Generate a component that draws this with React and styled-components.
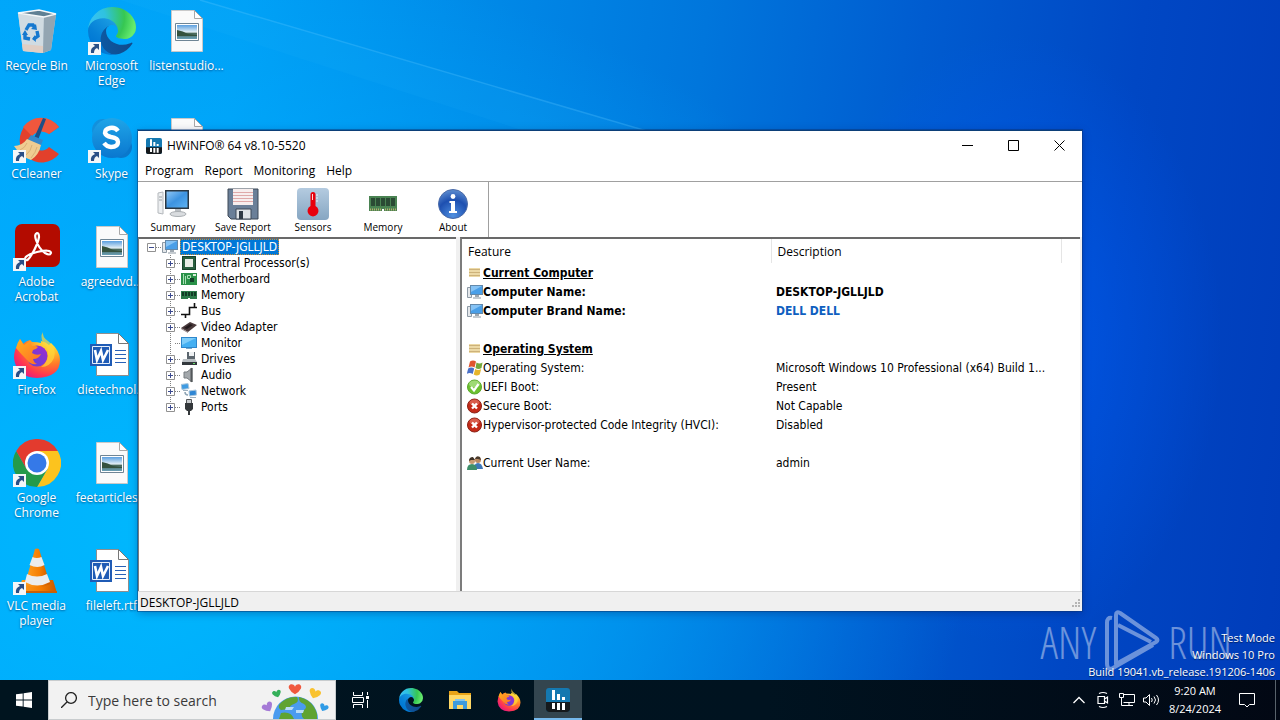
import React from "react";
import styled, { createGlobalStyle, css } from "styled-components";

const uiFont = css`
  font-family: "Open Sans", "Noto Sans", sans-serif;
`;

const classicFont = css`
  font-family: "DejaVu Sans Condensed", "DejaVu Sans", sans-serif;
`;

const GlobalStyle = createGlobalStyle`
  * {
    box-sizing: border-box;
  }

  body {
    margin: 0;
    ${uiFont}
  }

  button, input {
    font: inherit;
    color: inherit;
    border: none;
    padding: 0;
    background: none;
  }

  svg {
    display: block;
    flex: none;
  }
`;

/* ---------- desktop ---------- */

const Screen = styled.div`
  min-height: 100vh;
  display: flex;
  flex-direction: column;
  overflow: hidden;
`;

const Desktop = styled.main`
  flex: 1;
  position: relative;
  background: radial-gradient(
      ellipse 22% 60% at 79% 50%,
      rgba(0, 96, 255, 0.6),
      rgba(0, 80, 230, 0) 75%
    ),
    linear-gradient(
      97deg,
      #00a6fa 0%,
      #00a0f6 18%,
      #008ae8 35%,
      #0076dc 52%,
      #005cd0 68%,
      #0047c4 84%,
      #003cba 100%
    );
`;

const Glow = styled.div`
  position: absolute;
  inset: 0;
  background: radial-gradient(
    ellipse 62% 85% at 14% 78%,
    rgba(0, 188, 255, 0.85),
    rgba(0, 176, 255, 0.5) 55%,
    rgba(0, 160, 255, 0) 100%
  );
`;

const Beam = styled.svg`
  position: absolute;
  top: 0;
  left: 0;
  width: 100%;
  height: 100%;
`;

const Shortcuts = styled.div`
  position: relative;
  display: grid;
  grid-auto-flow: column;
  grid-template-rows: repeat(6, 108px);
  grid-auto-columns: 75px;
  margin-left: -1px;
`;

const ShortcutLink = styled.a`
  display: flex;
  flex-direction: column;
  align-items: center;
  padding-top: 7px;
  color: #fff;
  font-size: 12px;
  line-height: 15px;
  text-align: center;
  text-decoration: none;
  text-shadow: 0 1px 2px rgba(0, 30, 80, 0.6);
`;

const ShortcutPicture = styled.span`
  position: relative;
  width: 48px;
  height: 48px;
  margin-bottom: 3px;
`;

const ArrowBadge = styled.svg`
  position: absolute;
  left: 0;
  bottom: 0;
`;

const Watermark = styled.div`
  position: absolute;
  right: 48px;
  bottom: 6px;
  display: flex;
  align-items: center;
  gap: 8px;
  color: #fff;
  opacity: 0.42;
  font-family: "Open Sans Condensed Light", "Open Sans Condensed", "Roboto", sans-serif;
  font-size: 44px;
  font-weight: 300;
  line-height: 64px;
`;

const BuildInfo = styled.div`
  position: absolute;
  right: 5px;
  bottom: 0;
  color: #fff;
  font-size: 11px;
  line-height: 17px;
  text-align: right;
  text-shadow: 0 1px 1px rgba(0, 0, 0, 0.5);
`;

/* ---------- application window ---------- */

const Window = styled.section`
  position: absolute;
  top: 130px;
  left: 138px;
  right: 198px;
  bottom: 69px;
  display: flex;
  flex-direction: column;
  background: #fff;
  border-top: 1px solid #0c3f78;
  box-shadow: 0 0 0 1px rgba(10, 50, 110, 0.45), 0 2px 8px rgba(0, 20, 80, 0.35);
  color: #000;
`;

const TitleBar = styled.header`
  display: flex;
  align-items: center;
  height: 29px;
  padding-left: 8px;
`;

const Title = styled.h1`
  flex: 1;
  margin: 0 0 0 5px;
  font-size: 12px;
  font-weight: normal;
`;

const CaptionButton = styled.button`
  width: 46px;
  height: 29px;
  display: flex;
  align-items: center;
  justify-content: center;
`;

const MenuBar = styled.nav`
  display: flex;
  height: 21px;
  gap: 11px;
  padding-left: 7px;
  font-size: 12px;
  line-height: 22px;
`;

const Toolbar = styled.div`
  display: flex;
  height: 56px;
  border-top: 1px solid #a0a0a0;
`;

const ToolGroup = styled.div`
  display: flex;
  border-right: 1px solid #a0a0a0;
`;

const ToolButton = styled.button`
  width: 70px;
  display: flex;
  flex-direction: column;
  align-items: center;
  padding-top: 6px;
  font-size: 10px;
  line-height: 14px;
  white-space: nowrap;
`;

const Panes = styled.div`
  flex: 1;
  display: flex;
  gap: 4px;
  min-height: 0;
  ${classicFont}
  font-size: 12px;
  background: #f0f0f0;
`;

const pane = css`
  background: #fff;
  border-top: 2px solid #696969;
  border-left: 2px solid #7c7c7c;
`;

const TreePane = styled.div`
  ${pane}
  width: 318px;
  border-left-width: 1px;
`;

const ListPane = styled.div`
  ${pane}
  flex: 1;
  margin-right: 2px;
  overflow: hidden;
`;

const StatusBar = styled.footer`
  display: flex;
  justify-content: space-between;
  align-items: center;
  height: 20px;
  padding: 2px 0 0 2px;
  background: #f0f0f0;
  border-top: 1px solid #d7d7d7;
  font-size: 12px;
`;

/* ---------- tree ---------- */

const List = styled.ul`
  margin: 0;
  padding: 0;
  list-style: none;
`;

const Branch = styled(List)`
  background: repeating-linear-gradient(#808080 0 1px, #fff 1px 2px) 31px 0 / 1px
    calc(100% - 8px) no-repeat;
`;

const TreeRow = styled.div`
  display: flex;
  align-items: center;
  height: 16px;
  padding-left: ${props => (props.$level ? 27 : 8)}px;
`;

const Expander = styled.button`
  width: 9px;
  height: 9px;
  flex: none;
`;

const NoExpander = styled.span`
  width: 9px;
`;

const Connector = styled.span`
  width: 6px;
  height: 1px;
  background: repeating-linear-gradient(90deg, #808080 0 1px, #fff 1px 2px);
`;

const TreeLabel = styled.span`
  padding: 0 2px;
  margin-left: 2px;
  line-height: 16px;
  white-space: nowrap;
  ${props =>
    props.$selected &&
    css`
      color: #fff;
      background: #0078d7;
      outline: 1px dotted #d08a30;
      outline-offset: -1px;
    `}
`;

/* ---------- feature table ---------- */

const Table = styled.table`
  width: 100%;
  border-collapse: collapse;
  table-layout: fixed;
`;

const HeadCell = styled.th`
  height: 24px;
  padding: 0 6px;
  border-right: 1px solid #e5e5e5;
  ${uiFont}
  font-size: 12px;
  font-weight: normal;
  text-align: left;

  &:last-child {
    border-right: none;
  }
`;

const Cell = styled.td`
  height: 19px;
  padding: 0 5px;
  white-space: nowrap;
  font-weight: ${props => (props.$bold ? "bold" : "normal")};
  color: ${props => (props.$accent ? "#0f5fc0" : "#000")};
`;

const Feature = styled.span`
  display: flex;
  align-items: center;
  height: 19px;
  text-decoration: ${props => (props.$heading ? "underline" : "none")};
`;

/* ---------- taskbar ---------- */

const Taskbar = styled.footer`
  position: relative;
  display: flex;
  align-items: stretch;
  height: 40px;
  color: #fff;
  background: linear-gradient(90deg, #00141f, #001320 60%, #020814);
`;

const TaskButton = styled.button`
  width: 48px;
  margin-right: 1px;
  display: flex;
  align-items: center;
  justify-content: center;
  ${props =>
    props.$active &&
    css`
      background: #33454f;
      border-bottom: 2px solid #76b9ed;
      padding-top: 2px;
    `}
`;

const SearchBox = styled.label`
  display: flex;
  align-items: center;
  width: 288px;
  gap: 11px;
  padding-left: 12px;
  margin: 0 2px 0 -1px;
  color: #222;
  background: #f2f2f2;
  border: 1px solid #c8ccce;
`;

const SearchInput = styled.input`
  flex: 1;
  min-width: 0;
  font-size: 14px;
  outline: none;

  &::placeholder {
    color: #3a3a3a;
    opacity: 1;
  }
`;

const Tray = styled.div`
  display: flex;
  align-items: center;
  margin-left: auto;
`;

const TrayButton = styled.button`
  display: flex;
  justify-content: center;
  width: ${props => (props.$wide ? 40 : 24)}px;
`;

const Clock = styled.time`
  width: 64px;
  font-size: 11px;
  line-height: 18px;
  text-align: center;
`;

const ShowDesktop = styled.button`
  width: 5px;
  height: 40px;
  margin-left: 8px;
  border-left: 1px solid #59636b;
`;

/* ---------- desktop icons ---------- */

const RecycleBinIcon = () => (
  <svg width="48" height="48" viewBox="0 0 48 48">
    <path d="M5 6l21-3 17 4-5 36-8 3-20-2z" fill="#c9d3da" opacity=".92" />
    <path d="M5 6l26 3-1 37-20-2z" fill="#d3dce2" opacity=".9" />
    <path d="M31 9l12-2-5 36-8 3z" fill="#93a5b2" />
    <path d="M5 6l21-3 17 4-12 3z" fill="#5f8094" stroke="#f4f7f9" strokeWidth="1.400" />
    <path d="M9 37l21 2v7l-20-2z" fill="#e3cbbd" opacity=".8" />
    <g fill="none" stroke="#1578cf" strokeWidth="3.400">
      <path d="M13 23l3-5h4l2 3" />
      <path d="M24 24l1 5-4 3" />
      <path d="M17 32l-5-1v-4" />
    </g>
    <path d="M18 22l6 1-1-6zM22 28l-3 4 4 3zM9 28l3-5 3 5z" fill="#1578cf" />
  </svg>
);

const EdgeIcon = ({ size = 48, id = "edge" }) => (
  <svg width={size} height={size} viewBox="0 0 256 256">
    <defs>
      <linearGradient id={`${id}a`} x1="63" y1="177" x2="241" y2="177" gradientUnits="userSpaceOnUse">
        <stop offset="0" stopColor="#0c59a4" />
        <stop offset="1" stopColor="#114a8b" />
      </linearGradient>
      <linearGradient id={`${id}b`} x1="157" y1="100" x2="46" y2="221" gradientUnits="userSpaceOnUse">
        <stop offset="0" stopColor="#1b9de2" />
        <stop offset=".16" stopColor="#1595df" />
        <stop offset=".67" stopColor="#0680d7" />
        <stop offset="1" stopColor="#0078d4" />
      </linearGradient>
      <radialGradient id={`${id}c`} cx="30" cy="60" r="225" gradientUnits="userSpaceOnUse">
        <stop offset="0" stopColor="#35c1f1" />
        <stop offset=".3" stopColor="#2fc2df" />
        <stop offset=".75" stopColor="#36c752" />
        <stop offset="1" stopColor="#66eb6e" />
      </radialGradient>
    </defs>
    <g transform="translate(-4.63 -4.92)">
      <path
        fill={`url(#${id}a)`}
        d="M235.68 195.46a93.73 93.73 0 0 1-10.54 4.71 101.87 101.87 0 0 1-35.9 6.46c-47.32 0-88.54-32.55-88.54-74.32A31.48 31.48 0 0 1 117.13 105c-42.8 1.8-53.8 46.4-53.8 72.53 0 73.88 68.09 81.37 82.76 81.37 7.91 0 19.84-2.3 27-4.56l1.31-.44a128.34 128.34 0 0 0 66.6-52.8 4 4 0 0 0-5.32-5.64Z"
      />
      <path
        fill={`url(#${id}b)`}
        d="M110.34 246.34A79.2 79.2 0 0 1 87.6 225a80.72 80.72 0 0 1 29.53-120c3.12-1.47 8.45-4.13 15.54-4a32.35 32.35 0 0 1 25.69 13 31.88 31.88 0 0 1 6.36 18.66c0-.21 24.46-79.6-80-79.6-43.9 0-80 41.66-80 78.21a130.15 130.15 0 0 0 12.11 56 128 128 0 0 0 156.38 67.11 75.55 75.55 0 0 1-62.78-8Z"
      />
      <path
        fill={`url(#${id}c)`}
        d="M156.94 153.78c-.81 1.05-3.3 2.5-3.3 5.66 0 2.61 1.7 5.12 4.72 7.23 14.38 10 41.49 8.68 41.56 8.68a59.56 59.56 0 0 0 30.27-8.35 61.38 61.38 0 0 0 30.43-52.88c.26-22.41-8-37.31-11.34-43.91C228.09 28.76 182.35 4.92 132.61 4.92a128 128 0 0 0-128 126.2c.48-36.54 36.8-66.05 80-66.05 3.5 0 23.46.34 42 10.07 16.34 8.58 24.9 18.94 30.85 29.21 6.18 10.67 7.28 24.15 7.28 29.52s-2.74 13.33-7.8 19.91Z"
      />
    </g>
  </svg>
);

const ImageFileIcon = () => (
  <svg width="48" height="48" viewBox="0 0 48 48">
    <defs>
      <linearGradient id="photo" x1="0" y1="0" x2="0" y2="1">
        <stop offset="0" stopColor="#5b9fe0" />
        <stop offset=".5" stopColor="#e3eff5" />
        <stop offset=".6" stopColor="#4b6a5b" />
        <stop offset="1" stopColor="#6aa0b8" />
      </linearGradient>
    </defs>
    <path d="M8.500 3.500h23l8 8v33h-31z" fill="#fafafa" stroke="#c9c9c9" />
    <path d="M31.500 3.500v8h8z" fill="#fff" stroke="#a8a8a8" />
    <path d="M12.500 16.500h23v17h-23z" fill="#fff" stroke="#6f8595" />
    <path d="M14 18h20v14H14z" fill="url(#photo)" />
    <path d="M14 23q6 1 11 4l9 1v1H14z" fill="#35523e" />
  </svg>
);

const WordFileIcon = () => (
  <svg width="48" height="48" viewBox="0 0 48 48">
    <path d="M8.500 2.500h22l10 10v32h-32z" fill="#fff" stroke="#8e8e8e" />
    <path d="M30.500 2.500v10h10z" fill="#fff" stroke="#777" />
    <path d="M27 19.500h11M27 23.500h11M27 27.500h11M27 31.500h11" stroke="#2a62b8" />
    <path d="M2 13h22v22H2z" fill="#1f5bb5" />
    <path d="M4.500 15.500h17v17h-17z" fill="none" stroke="#e6eefa" strokeWidth="1" />
    <path d="M7 19l2 10 4-9 2 9 5-10" fill="none" stroke="#fff" strokeWidth="2.600" />
  </svg>
);

const CCleanerIcon = () => (
  <svg width="48" height="48" viewBox="0 0 48 48">
    <path d="M46 12a22 22 0 1 0 0 27l-10-7a10 10 0 1 1 0-13z" fill="#e2402c" />
    <path d="M46 12A22 22 0 0 0 10 12l9 9q8-8 17-2z" fill="#f0573d" />
    <path d="M30 3l-9 20 4 2L33 4z" fill="#1f4f86" />
    <path d="M18 20l12 5-3 8-14-6z" fill="#3588ca" />
    <path d="M14 24l14 6q-2 10-10 15Q8 42 1 31q8 0 13-7z" fill="#efcc91" />
    <path d="M14 28q-2 5-7 7M19 30q-1 6-6 10M24 32q-1 5-6 11" stroke="#d8b077" fill="none" />
  </svg>
);

const SkypeIcon = () => (
  <svg width="48" height="48" viewBox="0 0 48 48">
    <defs>
      <linearGradient id="skype" x1="0" y1="0" x2="0" y2="1">
        <stop offset="0" stopColor="#1fa5e8" />
        <stop offset="1" stopColor="#0a77cf" />
      </linearGradient>
    </defs>
    <circle cx="15" cy="15" r="11" fill="#1290dc" />
    <circle cx="33" cy="32" r="11" fill="#0a78cc" />
    <circle cx="24" cy="23" r="20" fill="url(#skype)" />
    <path
      d="M30 16q-3-4-8-3-5 1-5 5 1 3 6 4 7 1 7 5 0 5-7 5-4 0-7-4"
      fill="none"
      stroke="#fff"
      strokeWidth="4.400"
    />
  </svg>
);

const AcrobatIcon = () => (
  <svg width="48" height="48" viewBox="0 0 48 48">
    <rect x="2" y="1" width="45" height="43" rx="7" fill="#b30b00" />
    <path
      d="M24 10q-3 1-1 7 3 9 9 13 5 3 6 0 0-4-14-1-12 3-12 7 2 4 7-5 6-10 7-17 0-4-2-4z"
      fill="none"
      stroke="#fff"
      strokeWidth="2.200"
    />
  </svg>
);

const FirefoxIcon = ({ size = 48, id = "ff" }) => (
  <svg width={size} height={size} viewBox="0 0 48 48">
    <defs>
      <radialGradient id={`${id}a`} cx=".8" cy=".15" r="1">
        <stop offset="0" stopColor="#fff44f" />
        <stop offset=".3" stopColor="#ffc02c" />
        <stop offset=".55" stopColor="#ff7a28" />
        <stop offset=".8" stopColor="#ff3750" />
        <stop offset="1" stopColor="#e31587" />
      </radialGradient>
      <linearGradient id={`${id}b`} x1="0" y1="1" x2="1" y2="0">
        <stop offset="0" stopColor="#5b45d8" />
        <stop offset="1" stopColor="#a02bd0" />
      </linearGradient>
      <linearGradient id={`${id}c`} x1="0" y1="0" x2="1" y2="1">
        <stop offset="0" stopColor="#ffb21a" />
        <stop offset="1" stopColor="#ff6a2a" />
      </linearGradient>
    </defs>
    <path
      d="M30 1q-3 4-2 9 5 1 8 4l2-2q9 8 9 17 0 17-23 18Q3 46 1 27 1 18 6 12l1-4 3 5q3-3 7-4l2 2q6 0 9 1-1-7 2-11z"
      fill={`url(#${id}a)`}
    />
    <circle cx="24" cy="25" r="10.500" fill={`url(#${id}b)`} />
    <path
      d="M3 17q1-5 4-9l4 6q4-3 7-4-1 3 1 5 3-1 6 1-1 2-5 3l-1 3q4 3 9 1-2 5-8 5 1 4 4 5-7 1-10-4-6-6-11-12z"
      fill={`url(#${id}c)`}
    />
    <path d="M30 1q-3 5 0 11 6 5 5 13-1 7-7 11 9 0 13-9 3-11-6-17-6-4-5-9z" fill="#ffd53a" opacity=".7" />
  </svg>
);

const ChromeIcon = () => (
  <svg width="48" height="48" viewBox="0 0 48 48">
    <path d="M24 12h20.800A24 24 0 0 1 24 48L34.400 30z" fill="#fcc31e" />
    <path d="M3.200 12A24 24 0 0 0 24 48L34.400 30 13.600 30z" fill="#249a4a" />
    <path d="M3.200 12A24 24 0 0 1 44.800 12H24L13.600 30z" fill="#e33b2e" />
    <circle cx="24" cy="24" r="12" fill="#fff" />
    <circle cx="24" cy="24" r="9.500" fill="#3579e8" />
  </svg>
);

const VlcIcon = () => (
  <svg width="48" height="48" viewBox="0 0 48 48">
    <defs>
      <linearGradient id="cone" x1="0" x2="1">
        <stop offset="0" stopColor="#ffa022" />
        <stop offset=".6" stopColor="#f57c00" />
        <stop offset="1" stopColor="#c85800" />
      </linearGradient>
    </defs>
    <path d="M9 33h31l4 13H4z" fill="url(#cone)" />
    <path d="M4 44h40v2H4z" fill="#c96006" />
    <path d="M22 2q2-1 4 0l11 35q-13 7-25 0z" fill="url(#cone)" />
    <path d="M19.500 10q4 2 9 0l3 8q-7 4-15 0z" fill="#ececec" />
    <path d="M14 27q10 5 20 0l3 8q-13 7-25 0z" fill="#ececec" />
  </svg>
);

/* ---------- application icons ---------- */

const HwinfoIcon = ({ size = 16 }) => (
  <svg width={size} height={size} viewBox="0 0 24 24">
    <rect width="24" height="24" rx="3" fill="#1478b0" />
    <path d="M0 14h24v7a3 3 0 0 1-3 3H3a3 3 0 0 1-3-3z" fill="#15191c" />
    <path d="M7.500 2v10M12.500 6v6M17.500 9v3M7.500 15v6M12.500 15v7M17.500 15v7" stroke="#fff" strokeWidth="3" />
  </svg>
);

const ComputerIcon = () => (
  <svg width="32" height="32" viewBox="0 0 32 32">
    <defs>
      <linearGradient id="lcd" x1="0" y1="0" x2="1" y2="1">
        <stop offset="0" stopColor="#8fc6f5" />
        <stop offset=".5" stopColor="#3d93e0" />
        <stop offset="1" stopColor="#5db2f2" />
      </linearGradient>
    </defs>
    <path d="M1 5l5-1v22l-5-1z" fill="#eceef0" stroke="#b4b8bc" />
    <path d="M2 9h3M2 12h3" stroke="#9ba1a6" />
    <path d="M8 2h24v19H8z" fill="#2a3742" />
    <path d="M9.500 3.500h21v16h-21z" fill="url(#lcd)" />
    <path d="M18 21h6v4h-6z" fill="#b9bec3" />
    <ellipse cx="21" cy="26" rx="8" ry="2.500" fill="#d9dcdf" stroke="#a9aeb2" />
  </svg>
);

const SmallComputerIcon = () => (
  <svg width="16" height="16" viewBox="0 0 16 16">
    <path d="M.5 3.500h4v10h-4z" fill="#e4e7ea" stroke="#8e9aa5" />
    <path d="M3 1h13v10H3z" fill="#6389ab" />
    <path d="M4 2h11v8H4z" fill="#4a9fe8" />
    <path d="M4 2h11l-11 6z" fill="#86c3f5" />
    <path d="M8 11h4v2H8z" fill="#9fa8b0" />
    <path d="M6 13h8v2H6z" fill="#c5cbd0" />
  </svg>
);

const FloppyIcon = () => (
  <svg width="32" height="32" viewBox="0 0 32 32">
    <path d="M1 1h30v30H4l-3-3z" fill="#6a7f98" stroke="#3c4856" />
    <path d="M6 1h20v16H6z" fill="#f7eeee" />
    <path d="M6 4.500h20M6 7.500h20M6 10.500h20M6 13.500h20" stroke="#dfa9a9" />
    <path d="M9 21h15v10H9z" fill="#dfe3e7" stroke="#3c4856" />
    <path d="M12 23h4v8h-4z" fill="#2e3945" />
  </svg>
);

const ThermometerIcon = () => (
  <svg width="32" height="32" viewBox="0 0 32 32">
    <defs>
      <linearGradient id="tile" x1="0" y1="0" x2="0" y2="1">
        <stop offset="0" stopColor="#b4cbe0" />
        <stop offset="1" stopColor="#86a6c2" />
      </linearGradient>
    </defs>
    <rect width="32" height="32" rx="4" fill="url(#tile)" />
    <path d="M16 4a2.500 2.500 0 0 1 2.500 2.500V18a5.500 5.500 0 1 1-5 0V6.500A2.500 2.500 0 0 1 16 4z" fill="#e8000c" />
    <path d="M15.500 6v6" stroke="#ffd5d5" />
    <path d="M19 7h2M19 10h2M19 13h2" stroke="#e9f1f8" />
  </svg>
);

const RamIcon = () => (
  <svg width="32" height="32" viewBox="0 0 32 32">
    <path d="M2 8h28v15h-13v-2h-2v2H2z" fill="#4a8352" />
    <path d="M4 10h4v8H4zM9 10h4v8H9zM14 10h4v8h-4zM19 10h4v8h-4zM24 10h4v8h-4z" fill="#2b4a34" />
    <path d="M3 21.500h12M18 21.500h12" stroke="#b9b070" strokeDasharray="1 1" strokeWidth="2" />
  </svg>
);

const SmallRamIcon = () => (
  <svg width="16" height="16" viewBox="0 0 16 16">
    <path d="M0 4h16v8H9v-1H7v1H0z" fill="#2c7a4a" />
    <path d="M1 5h2v4H1zM4 5h2v4H4zM7 5h2v4H7zM10 5h2v4h-2zM13 5h2v4h-2z" fill="#123c26" />
  </svg>
);

const InfoIcon = () => (
  <svg width="32" height="32" viewBox="0 0 32 32">
    <defs>
      <radialGradient id="info" cx=".5" cy=".9" r=".9">
        <stop offset="0" stopColor="#4f8fe0" />
        <stop offset=".6" stopColor="#1d4fb0" />
        <stop offset="1" stopColor="#5f8ed0" />
      </radialGradient>
    </defs>
    <circle cx="16" cy="16" r="14.500" fill="url(#info)" stroke="#4a6aa8" />
    <circle cx="16" cy="8.500" r="2.400" fill="#fff" />
    <path d="M12.500 13H18v10h2v2h-8v-2h2v-8h-1.500z" fill="#fff" />
  </svg>
);

const CpuIcon = () => (
  <svg width="16" height="16" viewBox="0 0 16 16">
    <path d="M1 1h14v14H1z" fill="#2a5f3f" />
    <path d="M4 4h8v8H4z" fill="#e9ede6" />
    <path d="M1.500 1.500h13v13h-13z" fill="none" stroke="#174028" />
  </svg>
);

const BoardIcon = () => (
  <svg width="16" height="16" viewBox="0 0 16 16">
    <path d="M0 2h16v12H0z" fill="#2a9148" />
    <path d="M2.500 3v10M4.500 5v8M6.500 4.500h3v3h-3z" stroke="#a9e0b4" fill="none" />
    <path d="M9 7h4v4H9z" fill="#14402a" />
    <path d="M12 3h3v2h-3z" fill="#d8eedc" />
  </svg>
);

const BusIcon = () => (
  <svg width="16" height="16" viewBox="0 0 16 16">
    <path d="M0 11.500h8.500v-7H16M13.500 0v5M4.500 11v4" fill="none" stroke="#111" strokeWidth="1.600" />
  </svg>
);

const VideoCardIcon = () => (
  <svg width="16" height="16" viewBox="0 0 16 16">
    <path d="M0 9l9-6 7 3-9 7z" fill="#4a3a3c" />
    <path d="M3 9l6-4 3 1-6 4z" fill="#231b1d" />
    <path d="M0 9l7 4v1l-7-4z" fill="#8f7f80" />
  </svg>
);

const MonitorIcon = () => (
  <svg width="16" height="16" viewBox="0 0 16 16">
    <path d="M0 2h16v11H0z" fill="#2e87cc" />
    <path d="M1 3h14v9H1z" fill="#45b0f2" />
    <path d="M1 3h14L1 10z" fill="#7fcdf9" />
    <path d="M5 13h6v1H5z" fill="#7aa9c9" />
  </svg>
);

const DriveIcon = () => (
  <svg width="16" height="16" viewBox="0 0 16 16">
    <path d="M6 1h8v8H6z" fill="#5c666e" />
    <path d="M8 1h5v4H8z" fill="#eef1f3" />
    <path d="M2 8h12l2 3v3H1v-3z" fill="#b9bfc3" />
    <path d="M1 11h15v3H1z" fill="#33393d" />
    <path d="M12 12h2v1h-2z" fill="#69e06b" />
  </svg>
);

const SpeakerIcon = () => (
  <svg width="16" height="16" viewBox="0 0 16 16">
    <path d="M3 5h3l5-4v14l-5-4H3z" fill="#a3a8ac" stroke="#777c80" />
    <path d="M10.500 1v14" stroke="#54585b" strokeWidth="2" />
  </svg>
);

const NetworkIcon = () => (
  <svg width="16" height="16" viewBox="0 0 16 16">
    <path d="M0 1.500L7 .5l1 5-7 1z" fill="#3f9be2" stroke="#a9c6dc" />
    <path d="M2 7h5v1H2z" fill="#9fb2c0" />
    <path d="M8 8l7-1 .5 5-7 1z" fill="#2e86d4" stroke="#a9c6dc" />
    <path d="M9 14h6v1H9z" fill="#9fb2c0" />
    <path d="M4 9q0 3 3 3" fill="none" stroke="#8fa5b5" strokeWidth="1.500" />
  </svg>
);

const PortIcon = () => (
  <svg width="16" height="16" viewBox="0 0 16 16">
    <path d="M5.500 .5h5v4h-5z" fill="#c9cccf" stroke="#55595c" />
    <path d="M4 4h8v6l-2 2H6l-2-2z" fill="#34383b" />
    <path d="M8 12v4" stroke="#34383b" strokeWidth="2" />
  </svg>
);

const SectionIcon = () => (
  <svg width="16" height="16" viewBox="0 0 16 16">
    <path d="M2 3h11v9H2z" fill="#ecd9a6" />
    <path d="M2 4.500h11M2 7.500h11M2 10.500h11" stroke="#cdb27a" />
  </svg>
);

const WindowsXpIcon = () => (
  <svg width="16" height="16" viewBox="0 0 16 16">
    <path d="M3 1.500q3-2 6 0L7.500 7.500q-3-2-6 0z" fill="#e0552f" />
    <path d="M9.500 2.500q3 2 6 0L14.500 8q-3 2-6 0z" fill="#74a83c" />
    <path d="M1.200 8.500q3-2 6 0L5.700 14q-3-2-6 0z" fill="#4a70c8" />
    <path d="M8.200 9q3 2 6 0l-1.500 5.500q-3 2-6 0z" fill="#e6b52c" />
  </svg>
);

const CheckIcon = () => (
  <svg width="16" height="16" viewBox="0 0 16 16">
    <circle cx="7.500" cy="8" r="7" fill="#6cc02f" stroke="#5aa82c" />
    <ellipse cx="7.500" cy="5" rx="5.500" ry="3.500" fill="#b5e693" opacity=".7" />
    <path d="M4 8l3 3.500L11.500 5" fill="none" stroke="#fff" strokeWidth="2.200" />
  </svg>
);

const CrossIcon = () => (
  <svg width="16" height="16" viewBox="0 0 16 16">
    <circle cx="7.500" cy="8" r="7" fill="#c42a18" stroke="#8a2015" />
    <ellipse cx="7.500" cy="4.500" rx="5" ry="3" fill="#e8806f" opacity=".6" />
    <path d="M5 5.500l5 5M10 5.500l-5 5" stroke="#fff" strokeWidth="2.400" />
  </svg>
);

const UsersIcon = () => (
  <svg width="16" height="16" viewBox="0 0 16 16">
    <circle cx="11" cy="5" r="3" fill="#b98a62" />
    <path d="M8 4q1-4 5-2l1 3-3-1z" fill="#4b3a2c" />
    <path d="M7 14q0-6 4-6t5 6z" fill="#3f78b8" />
    <circle cx="5" cy="6" r="3" fill="#c99b72" />
    <path d="M2 6q0-4 4-4l2 3-4 0z" fill="#3d3026" />
    <path d="M0 15q0-6 5-6t5 6z" fill="#3f8f6a" />
  </svg>
);

const ExpanderGlyph = ({ open }) => (
  <svg width="9" height="9" viewBox="0 0 9 9">
    <path d="M.5 .5h8v8h-8z" fill="#fff" stroke="#919191" />
    <path d={open ? "M2 4.500h5" : "M2 4.500h5M4.500 2v5"} stroke="#3b4a8f" />
  </svg>
);

/* ---------- taskbar icons ---------- */

const StartIcon = () => (
  <svg width="16" height="16" viewBox="0 0 16 16">
    <path d="M0 2.300L6.700 1.400V7.600H0zM7.600 1.200L16 0v7.600H7.600zM0 8.400h6.700v6.200L0 13.700zM7.600 8.400H16V16l-8.400-1.200z" fill="#fff" />
  </svg>
);

const SearchIcon = () => (
  <svg width="16" height="16" viewBox="0 0 16 16">
    <circle cx="10" cy="6" r="5.400" fill="none" stroke="#222" strokeWidth="1.300" />
    <path d="M6 10l-6 6" stroke="#222" strokeWidth="1.300" />
  </svg>
);

const heart = "M0 2C-2-3-9-1-7 4Q-5 8 0 11 5 8 7 4C9-1 2-3 0 2z";

const EarthIcon = () => (
  <svg width="76" height="38" viewBox="0 0 76 38">
    <path d={heart} transform="translate(36 4) scale(.85)" fill="#f0583e" />
    <path d={heart} transform="translate(17 10) rotate(-18) scale(.6)" fill="#35b05a" />
    <path d={heart} transform="translate(57 9) rotate(20) scale(.8)" fill="#f9c22f" />
    <path d={heart} transform="translate(7 23) rotate(-30) scale(.75)" fill="#a57ad6" />
    <path d={heart} transform="translate(66 24) rotate(25) scale(.6)" fill="#2f9be6" />
    <path d="M14 38a22.500 22.500 0 0 1 45 0z" fill="#4a9bef" />
    <path d="M20 24q7-9 18-8 3 5-3 7-4 1-5 5l-8 1q-3-2-2-5zM40 16q14 3 18 17v5H45q-5-5 0-9 4-3 0-6-6-2-5-7zM22 32q10-2 13 6H20z" fill="#5fa331" />
    <path d="M27 26h8l-2 3h-7zM37 29h8l-1 3h-7z" fill="#b8dcf8" />
  </svg>
);

const TaskViewIcon = () => (
  <svg width="20" height="16" viewBox="0 0 20 16">
    <path d="M1.500 0v3.500h9V0M1.500 16v-3.500h9V16M.5 5.500h11v5H.5z" fill="none" stroke="#fff" />
    <path d="M15.500 0v3M15.500 8v8" stroke="#fff" />
    <path d="M14 4h3v3h-3z" fill="#fff" />
  </svg>
);

const ExplorerIcon = () => (
  <svg width="22" height="20" viewBox="0 0 22 20">
    <path d="M0 1h8l2 2h12v4H0z" fill="#e8a317" />
    <path d="M0 5h22v14H0z" fill="#ffd866" />
    <path d="M4 11h14v8h-4v-4H8v4H4z" fill="#3f9bdc" />
    <path d="M6 9h10v2H6z" fill="#83c5ee" />
  </svg>
);

const ChevronUpIcon = () => (
  <svg width="12" height="16" viewBox="0 0 12 16">
    <path d="M.5 11L6 5.500 11.500 11" fill="none" stroke="#fff" strokeWidth="1.300" />
  </svg>
);

const MeetNowIcon = () => (
  <svg width="18" height="18" viewBox="0 0 18 18">
    <path d="M4 5.500h6.500v7H4zM10.500 8l3-2v6l-3-2M5 2.500q4-2 8 0M5 15.500q4 2 8 0" fill="none" stroke="#fff" strokeWidth="1.200" />
  </svg>
);

const EthernetIcon = () => (
  <svg width="18" height="16" viewBox="0 0 18 16">
    <path d="M5.500 2.500h11v8h-11M11 10.500v3M7 13.500h8M1.500 1.500h4v4h-4zM3.500 5.500v8h4" fill="none" stroke="#fff" />
  </svg>
);

const VolumeIcon = () => (
  <svg width="18" height="16" viewBox="0 0 18 16">
    <path d="M1.500 6h2.500l3.500-3.500v11L4 10H1.500zM9.500 6q1.500 2 0 4M12 4.500q3 3.500 0 7M14.500 3q4 5 0 10" fill="none" stroke="#fff" />
  </svg>
);

const ActionCenterIcon = () => (
  <svg width="16" height="16" viewBox="0 0 16 16">
    <path d="M.5 1.500h15v11h-5L8 15l-2.500-2.500h-5z" fill="none" stroke="#fff" />
  </svg>
);

/* ---------- data ---------- */

const shortcuts = [
  { label: "Recycle Bin", icon: <RecycleBinIcon /> },
  { label: "CCleaner", icon: <CCleanerIcon />, link: true },
  { label: "Adobe Acrobat", icon: <AcrobatIcon />, link: true },
  { label: "Firefox", icon: <FirefoxIcon />, link: true },
  { label: "Google Chrome", icon: <ChromeIcon />, link: true },
  { label: "VLC media player", icon: <VlcIcon />, link: true },
  { label: "Microsoft Edge", icon: <EdgeIcon />, link: true },
  { label: "Skype", icon: <SkypeIcon />, link: true },
  { label: "agreedvd...", icon: <ImageFileIcon /> },
  { label: "dietechnol...", icon: <WordFileIcon /> },
  { label: "feetarticles...", icon: <ImageFileIcon /> },
  { label: "fileleft.rtf", icon: <WordFileIcon /> },
  { label: "listenstudio...", icon: <ImageFileIcon /> },
  { label: "", icon: <ImageFileIcon /> }
];

const tools = [
  { label: "Summary", icon: <ComputerIcon /> },
  { label: "Save Report", icon: <FloppyIcon /> },
  { label: "Sensors", icon: <ThermometerIcon /> },
  { label: "Memory", icon: <RamIcon /> },
  { label: "About", icon: <InfoIcon /> }
];

const devices = [
  { label: "Central Processor(s)", icon: <CpuIcon /> },
  { label: "Motherboard", icon: <BoardIcon /> },
  { label: "Memory", icon: <SmallRamIcon /> },
  { label: "Bus", icon: <BusIcon /> },
  { label: "Video Adapter", icon: <VideoCardIcon /> },
  { label: "Monitor", icon: <MonitorIcon />, leaf: true },
  { label: "Drives", icon: <DriveIcon /> },
  { label: "Audio", icon: <SpeakerIcon /> },
  { label: "Network", icon: <NetworkIcon /> },
  { label: "Ports", icon: <PortIcon /> }
];

const features = [
  { name: "Current Computer", icon: <SectionIcon />, heading: true },
  { name: "Computer Name:", icon: <SmallComputerIcon />, value: "DESKTOP-JGLLJLD", bold: true },
  {
    name: "Computer Brand Name:",
    icon: <SmallComputerIcon />,
    value: "DELL DELL",
    bold: true,
    accent: true
  },
  {},
  { name: "Operating System", icon: <SectionIcon />, heading: true },
  {
    name: "Operating System:",
    icon: <WindowsXpIcon />,
    value: "Microsoft Windows 10 Professional (x64) Build 1..."
  },
  { name: "UEFI Boot:", icon: <CheckIcon />, value: "Present" },
  { name: "Secure Boot:", icon: <CrossIcon />, value: "Not Capable" },
  { name: "Hypervisor-protected Code Integrity (HVCI):", icon: <CrossIcon />, value: "Disabled" },
  {},
  { name: "Current User Name:", icon: <UsersIcon />, value: "admin" }
];

/* ---------- parts ---------- */

const Shortcut = ({ label, icon, link }) => (
  <ShortcutLink href="#">
    <ShortcutPicture>
      {icon}
      {link && (
        <ArrowBadge width="13" height="13" viewBox="0 0 13 13">
          <path d="M0 0h13v13H0z" fill="#f4f6f8" />
          <path d="M5 2h6v6L9 6q-3 1-3 5H3q-1-5 4-7z" fill="#2a4f86" />
        </ArrowBadge>
      )}
    </ShortcutPicture>
    {label}
  </ShortcutLink>
);

const DeviceTree = () => (
  <List>
    <li>
      <TreeRow>
        <Expander aria-label="Collapse">
          <ExpanderGlyph open />
        </Expander>
        <Connector />
        <SmallComputerIcon />
        <TreeLabel $selected>DESKTOP-JGLLJLD</TreeLabel>
      </TreeRow>
      <Branch>
        {devices.map(({ label, icon, leaf }) => (
          <li key={label}>
            <TreeRow $level={1}>
              {leaf ? (
                <NoExpander />
              ) : (
                <Expander aria-label="Expand">
                  <ExpanderGlyph />
                </Expander>
              )}
              <Connector />
              {icon}
              <TreeLabel>{label}</TreeLabel>
            </TreeRow>
          </li>
        ))}
      </Branch>
    </li>
  </List>
);

const FeatureTable = () => (
  <Table>
    <colgroup>
      <col width="50%" />
      <col width="47%" />
      <col />
    </colgroup>
    <thead>
      <tr>
        <HeadCell>Feature</HeadCell>
        <HeadCell>Description</HeadCell>
        <HeadCell />
      </tr>
    </thead>
    <tbody>
      {features.map(({ name, icon, value, heading, bold, accent }, i) => (
        <tr key={i}>
          <Cell $bold={heading || bold}>
            {name && (
              <Feature $heading={heading}>
                {icon}
                {name}
              </Feature>
            )}
          </Cell>
          <Cell $bold={bold} $accent={accent}>
            {value}
          </Cell>
          <Cell />
        </tr>
      ))}
    </tbody>
  </Table>
);

const AppWindow = () => (
  <Window>
    <TitleBar>
      <HwinfoIcon />
      <Title>HWiNFO® 64 v8.10-5520</Title>
      <CaptionButton aria-label="Minimize">
        <svg width="11" height="11" viewBox="0 0 11 11">
          <path d="M0 5.500h11" stroke="#000" />
        </svg>
      </CaptionButton>
      <CaptionButton aria-label="Maximize">
        <svg width="11" height="11" viewBox="0 0 11 11">
          <path d="M.5 .5h10v10H.5z" fill="none" stroke="#000" />
        </svg>
      </CaptionButton>
      <CaptionButton aria-label="Close">
        <svg width="11" height="11" viewBox="0 0 11 11">
          <path d="M.5 .5l10 10M10.500 .5l-10 10" stroke="#000" />
        </svg>
      </CaptionButton>
    </TitleBar>
    <MenuBar>
      <button>Program</button>
      <button>Report</button>
      <button>Monitoring</button>
      <button>Help</button>
    </MenuBar>
    <Toolbar>
      <ToolGroup>
        {tools.map(({ label, icon }) => (
          <ToolButton key={label}>
            {icon}
            {label}
          </ToolButton>
        ))}
      </ToolGroup>
    </Toolbar>
    <Panes>
      <TreePane>
        <DeviceTree />
      </TreePane>
      <ListPane>
        <FeatureTable />
      </ListPane>
    </Panes>
    <StatusBar>
      DESKTOP-JGLLJLD
      <svg width="12" height="12" viewBox="0 0 12 12">
        <path
          d="M8 2h2v2H8zM5 5h2v2H5zM8 5h2v2H8zM2 8h2v2H2zM5 8h2v2H5zM8 8h2v2H8z"
          fill="#b5b5b5"
        />
      </svg>
    </StatusBar>
  </Window>
);

export default () => (
  <Screen>
    <GlobalStyle />
    <Desktop>
      <Glow />
      <Beam viewBox="0 0 1280 680" preserveAspectRatio="none">
        <path d="M200 0L660 136H540L120 0z" fill="#3cc0ff" opacity=".07" />
        <path d="M200 0L650 132" stroke="#5cc8ff" strokeWidth="1.500" opacity=".3" />
      </Beam>
      <Shortcuts>
        {shortcuts.map((shortcut, i) => (
          <Shortcut key={i} {...shortcut} />
        ))}
      </Shortcuts>
      <AppWindow />
      <Watermark>
        ANY
        <svg width="56" height="64" viewBox="0 0 56 64" fill="none" stroke="#fff" strokeWidth="4">
          <path d="M8 8Q3 7 3 13v40q0 8 6 5l40-23" />
          <path d="M12 5v49l40-22q3-2 0-4L16 3q-4-2-4 2z" strokeLinejoin="round" />
          <path d="M14 15l33 17" />
        </svg>
        RUN
      </Watermark>
      <BuildInfo>
        Test Mode
        <br />
        Windows 10 Pro
        <br />
        Build 19041.vb_release.191206-1406
      </BuildInfo>
    </Desktop>
    <Taskbar>
      <TaskButton aria-label="Start">
        <StartIcon />
      </TaskButton>
      <SearchBox>
        <SearchIcon />
        <SearchInput type="text" aria-label="Search" placeholder="Type here to search" />
        <EarthIcon />
      </SearchBox>
      <TaskButton aria-label="Task View">
        <TaskViewIcon />
      </TaskButton>
      <TaskButton aria-label="Microsoft Edge">
        <EdgeIcon size={24} id="edgeTask" />
      </TaskButton>
      <TaskButton aria-label="File Explorer">
        <ExplorerIcon />
      </TaskButton>
      <TaskButton aria-label="Firefox">
        <FirefoxIcon size={24} id="ffTask" />
      </TaskButton>
      <TaskButton aria-label="HWiNFO" $active>
        <HwinfoIcon size={24} />
      </TaskButton>
      <Tray>
        <TrayButton aria-label="Show hidden icons">
          <ChevronUpIcon />
        </TrayButton>
        <TrayButton aria-label="Meet Now">
          <MeetNowIcon />
        </TrayButton>
        <TrayButton aria-label="Network">
          <EthernetIcon />
        </TrayButton>
        <TrayButton aria-label="Volume">
          <VolumeIcon />
        </TrayButton>
        <Clock>
          9:20 AM
          <br />
          8/24/2024
        </Clock>
        <TrayButton aria-label="Notifications" $wide>
          <ActionCenterIcon />
        </TrayButton>
        <ShowDesktop aria-label="Show desktop" />
      </Tray>
    </Taskbar>
  </Screen>
);
